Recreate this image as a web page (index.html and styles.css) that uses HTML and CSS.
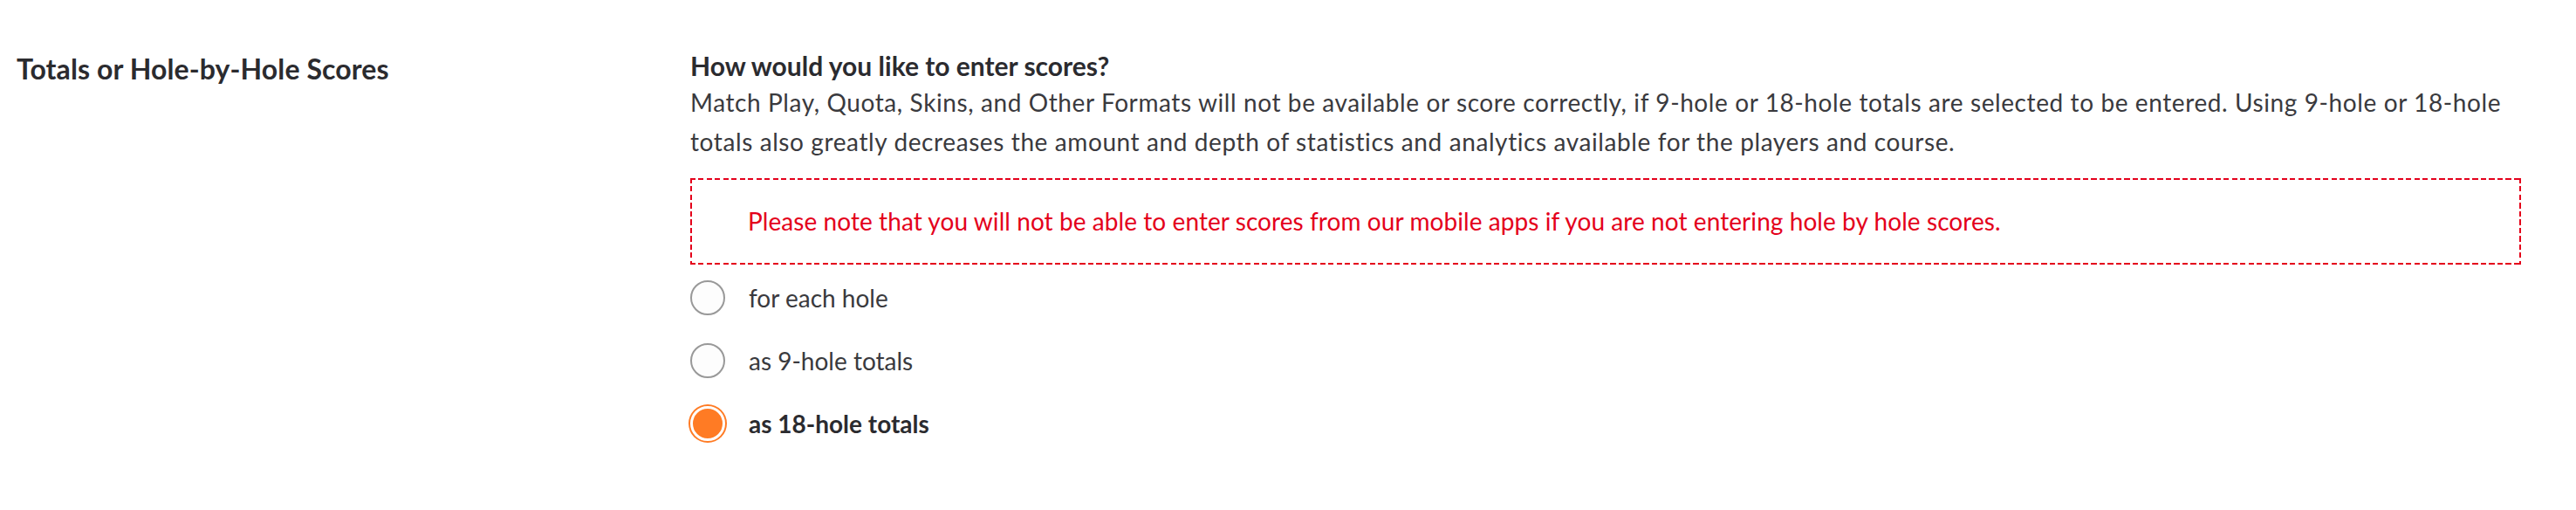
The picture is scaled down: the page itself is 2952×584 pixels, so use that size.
FILE: index.html
```html
<!DOCTYPE html>
<html>
<head>
<meta charset="utf-8">
<link rel="stylesheet" href="styles.css">
</head>
<body>
<div class="row">
  <div class="label">Totals or Hole-by-Hole Scores</div>
  <div class="field">
    <div class="question">How would you like to enter scores?</div>
    <p class="help">Match Play, Quota, Skins, and Other Formats will not be available or score correctly, if 9-hole or 18-hole totals are selected to be entered. Using 9-hole or 18-hole totals also greatly decreases the amount and depth of statistics and analytics available for the players and course.</p>
    <div class="notice">Please note that you will not be able to enter scores from our mobile apps if you are not entering hole by hole scores.</div>
    <div class="options">
      <label class="option"><span class="radio"></span><span class="opt-text">for each hole</span></label>
      <label class="option"><span class="radio"></span><span class="opt-text">as 9-hole totals</span></label>
      <label class="option checked"><span class="radio"></span><span class="opt-text">as 18-hole totals</span></label>
    </div>
  </div>
</div>
</body>
</html>
```
FILE: styles.css
```css
html, body {
  margin: 0;
  padding: 0;
  background: #ffffff;
}
body {
  font-family: Lato, "Liberation Sans", sans-serif;
  font-size: 28px;
  color: #333337;
}
.row {
  display: grid;
  grid-template-columns: 772px 1fr;
  padding: 55px 63px 0 19px;
}
.label {
  font-weight: 700;
  font-size: 32px;
  line-height: 40px;
  margin-top: 4px;
  letter-spacing: 0.1px;
  color: #2b2b2f;
}
.question {
  font-weight: 700;
  font-size: 30px;
  line-height: 40px;
  color: #2b2b2f;
}
.help {
  margin: 0;
  line-height: 45px;
  letter-spacing: 0.6px;
  color: #3a3a3e;
}
.notice {
  margin-top: 19px;
  padding: 27px 66px;
  line-height: 45px;
  letter-spacing: 0.07px;
  color: #e4001b;
  background:
    repeating-linear-gradient(90deg, #e4001b 0 6px, transparent 6px 9.5px) left top / 100% 2px no-repeat,
    repeating-linear-gradient(90deg, #e4001b 0 6px, transparent 6px 9.5px) left bottom / 100% 2px no-repeat,
    repeating-linear-gradient(180deg, #e4001b 0 6px, transparent 6px 9.5px) left top / 2px 100% no-repeat,
    repeating-linear-gradient(180deg, #e4001b 0 6px, transparent 6px 9.5px) right top / 2px 100% no-repeat;
}
.options {
  margin-top: 2px;
  display: flex;
  flex-direction: column;
}
.option {
  height: 72px;
  display: flex;
  align-items: center;
  color: #3a3a3e;
}
.radio {
  box-sizing: border-box;
  width: 40px;
  height: 40px;
  border: 2px solid #999999;
  border-radius: 50%;
  background: #fdfdfd;
  flex: none;
}
.opt-text {
  margin-left: 27px;
}
.option.checked .radio {
  border: 3px solid #ffffff;
  background: #ff7b24;
  box-shadow: 0 0 0 2px #ff7b24;
}
.option.checked .opt-text {
  font-weight: 700;
  color: #2b2b2f;
}
```
